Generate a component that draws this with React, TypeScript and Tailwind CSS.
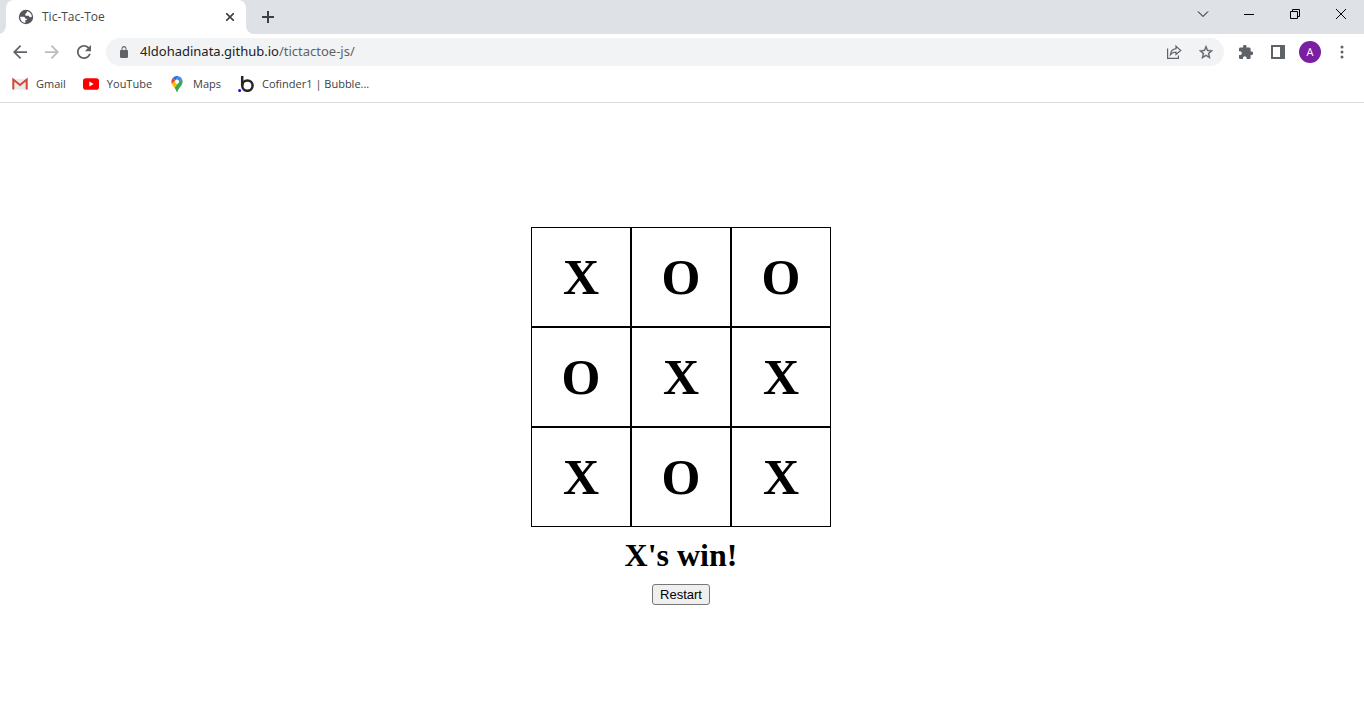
import { useState } from "react";
import type { ReactNode } from "react";

const initialBoard = ["X", "O", "O", "O", "X", "X", "X", "O", "X"];
const lines = [
  [0, 1, 2], [3, 4, 5], [6, 7, 8],
  [0, 3, 6], [1, 4, 7], [2, 5, 8],
  [0, 4, 8], [2, 4, 6],
];

function findWinner(board: string[]) {
  const line = lines.find(([a, b, c]) => board[a] && board[a] === board[b] && board[a] === board[c]);
  return line ? board[line[0]] : "";
}

function IconButton({ label, children, className = "" }: { label: string; children: ReactNode; className?: string }) {
  return (
    <button type="button" aria-label={label} className={`flex h-7 w-8 shrink-0 items-center justify-center ${className}`}>
      {children}
    </button>
  );
}

function TabStrip() {
  return (
    <header className="flex h-[34px] shrink-0 items-stretch bg-[#dee1e6] pl-1.5">
      <div className="relative flex w-60 items-center rounded-t-lg bg-white pl-3 pr-2">
        <svg className="absolute bottom-0 -left-2 h-2 w-2" viewBox="0 0 8 8" fill="#fff"><path d="M8 0v8H0a8 8 0 0 0 8-8z" /></svg>
        <svg className="absolute bottom-0 -right-2 h-2 w-2" viewBox="0 0 8 8" fill="#fff"><path d="M0 0v8h8a8 8 0 0 1-8-8z" /></svg>
        <svg className="h-4 w-4" viewBox="0 0 16 16">
          <circle cx="8" cy="8" r="7.2" fill="#54575c" />
          <path d="M2.100 7.700h3.300c1.300 0 1.900.9 1.900 2h1.500v1.300H7.400v2.700C4.300 13.700 2.200 11.100 2.100 7.700zM8.900 2.300c2.600.4 4.700 2.500 5 5.200-.5.7-1.300 1-2.200.6-.6-.3-.9-.7-.9-1.300H7.400V5.300c0-.8.6-1.200 1.300-1.200z" fill="#fff" />
        </svg>
        <span className="ml-2 flex-1 text-xs text-[#45494d]">Tic-Tac-Toe</span>
        <button type="button" aria-label="Close tab" className="flex h-4 w-4 items-center justify-center">
          <svg className="h-2 w-2" viewBox="0 0 8 8" stroke="#3c4043" strokeWidth="1.6"><path d="M0 0l8 8M8 0L0 8" /></svg>
        </button>
      </div>
      <button type="button" aria-label="New tab" className="ml-2 flex w-7 items-center justify-center">
        <svg className="h-3 w-3" viewBox="0 0 12 12" stroke="#3c4043" strokeWidth="2"><path d="M6 0v12M0 6h12" /></svg>
      </button>
      <div className="ml-auto flex h-7 text-black">
        <button type="button" aria-label="Search tabs" className="flex w-[46px] items-center justify-center">
          <svg className="h-3 w-3" viewBox="0 0 12 12" fill="none" stroke="currentColor"><path d="M1 3.500l5 5 5-5" /></svg>
        </button>
        <button type="button" aria-label="Minimize" className="flex w-[46px] items-center justify-center">
          <svg className="h-2.5 w-2.5" viewBox="0 0 10 10" fill="none" stroke="currentColor"><path d="M0 5.500h10" /></svg>
        </button>
        <button type="button" aria-label="Restore" className="flex w-[46px] items-center justify-center">
          <svg className="h-2.5 w-2.5" viewBox="0 0 10 10" fill="none" stroke="currentColor"><path d="M.5 2.500h7v7h-7zM2.500 2.500v-2h7v7h-2" /></svg>
        </button>
        <button type="button" aria-label="Close window" className="flex w-[46px] items-center justify-center">
          <svg className="h-2.5 w-2.5" viewBox="0 0 10 10" fill="none" stroke="currentColor"><path d="M0 0l10 10M10 0L0 10" /></svg>
        </button>
      </div>
    </header>
  );
}

function Toolbar() {
  return (
    <nav className="flex h-9 shrink-0 items-center bg-white pl-1 pr-1.5 text-[#5f6368]" aria-label="Navigation">
      <IconButton label="Back">
        <svg className="h-3.5 w-3.5" viewBox="4 4 16 16" fill="currentColor"><path d="M20 11H7.830l5.590-5.590L12 4l-8 8 8 8 1.410-1.410L7.830 13H20v-2z" /></svg>
      </IconButton>
      <IconButton label="Forward" className="text-[#babcbe]">
        <svg className="h-3.5 w-3.5" viewBox="4 4 16 16" fill="currentColor"><path d="M12 4l-1.410 1.410L16.170 11H4v2h12.170l-5.580 5.590L12 20l8-8z" /></svg>
      </IconButton>
      <IconButton label="Reload">
        <svg className="h-3.5 w-3.5" viewBox="4 4 16 16" fill="currentColor"><path d="M17.650 6.350C16.200 4.900 14.210 4 12 4c-4.420 0-7.990 3.580-7.990 8s3.570 8 7.990 8c3.730 0 6.840-2.550 7.730-6h-2.080c-.82 2.330-3.040 4-5.650 4-3.310 0-6-2.690-6-6s2.690-6 6-6c1.660 0 3.140.69 4.220 1.780L13 11h7V4l-2.350 2.350z" /></svg>
      </IconButton>
      <div className="ml-1.5 flex h-7 flex-1 items-center rounded-full bg-[#f1f3f4] pl-3.5 pr-0.5">
        <svg className="h-3 w-2" viewBox="4 1 16 21" preserveAspectRatio="none" fill="currentColor"><path d="M18 8h-1V6c0-2.760-2.240-5-5-5S7 3.240 7 6v2H6c-1.100 0-2 .9-2 2v10c0 1.100.9 2 2 2h12c1.100 0 2-.9 2-2V10c0-1.100-.9-2-2-2zM9 6c0-1.660 1.340-3 3-3s3 1.340 3 3v2H9z" /></svg>
        <span className="ml-3 flex-1 font-['Noto_Sans',sans-serif] text-[13px]"><span className="text-[#202124]">4ldohadinata.github.io</span>/tictactoe-js/</span>
        <IconButton label="Share">
          <svg className="h-4 w-4" viewBox="0 0 16 16" fill="none" stroke="currentColor" strokeWidth="1.200"><path d="M1.600 4.500v9.900h10.800v-3M10 2.200l4.700 4.200L10 10.500V8.200c-2.500 0-4.300.8-5.600 2.500.4-3.300 2.300-5.500 5.600-6z" /></svg>
        </IconButton>
        <IconButton label="Bookmark this page">
          <svg className="h-3.5 w-3.5" viewBox="2 2 20 19" fill="currentColor" stroke="currentColor" strokeWidth="0.400"><path d="M22 9.240l-7.190-.62L12 2 9.190 8.630 2 9.240l5.460 4.730L5.820 21 12 17.270 18.180 21l-1.630-7.030L22 9.240zM12 15.400l-3.760 2.270 1-4.280-3.320-2.880 4.380-.38L12 6.100l1.710 4.040 4.380.38-3.320 2.880 1 4.280L12 15.400z" /></svg>
        </IconButton>
      </div>
      <IconButton label="Extensions" className="ml-1.5">
        <svg className="h-3.5 w-3.5" viewBox="2 1.500 20.500 20.500" fill="currentColor"><path d="M20.500 11H19V7c0-1.100-.9-2-2-2h-4V3.500C13 2.120 11.880 1 10.500 1S8 2.120 8 3.500V5H4c-1.100 0-1.990.9-1.990 2v3.800H3.500c1.490 0 2.700 1.210 2.700 2.700s-1.210 2.700-2.700 2.700H2V20c0 1.100.9 2 2 2h3.800v-1.500c0-1.490 1.210-2.700 2.700-2.700 1.490 0 2.700 1.210 2.700 2.700V22H17c1.100 0 2-.9 2-2v-4h1.500c1.380 0 2.500-1.120 2.500-2.500S21.880 11 20.500 11z" /></svg>
      </IconButton>
      <IconButton label="Side panel">
        <svg className="h-3.5 w-3.5" viewBox="0 0 14 14" fill="currentColor"><path fillRule="evenodd" d="M0 0h14v14H0zM2 2v10h7V2z" /></svg>
      </IconButton>
      <IconButton label="Profile">
        <span className="flex h-[22px] w-[22px] items-center justify-center rounded-full bg-[#7b1fa2] text-[11px] text-white">A</span>
      </IconButton>
      <IconButton label="Menu">
        <svg className="h-3.5 w-1" viewBox="0 0 4 14" fill="currentColor"><circle cx="2" cy="2" r="1.500" /><circle cx="2" cy="7" r="1.500" /><circle cx="2" cy="12" r="1.500" /></svg>
      </IconButton>
    </nav>
  );
}

function Bookmark({ label, children }: { label: string; children: ReactNode }) {
  return (
    <a href="#" className="flex items-center gap-2">
      {children}
      <span className="whitespace-nowrap">{label}</span>
    </a>
  );
}

function BookmarksBar() {
  return (
    <nav className="flex h-[33px] shrink-0 items-center gap-[17px] border-b border-[#dadce0] bg-white pb-1 pl-3 text-[11px] text-[#3c4043]" aria-label="Bookmarks">
      <Bookmark label="Gmail">
        <svg className="h-4 w-4" viewBox="0 0 16 16">
          <path d="M1.500 3h13v10.500h-13z" fill="#eceaea" />
          <path d="M1.300 13.500V3.500L8 9l6.700-5.500v10" fill="none" stroke="#d14836" strokeWidth="2" />
        </svg>
      </Bookmark>
      <Bookmark label="YouTube">
        <svg className="h-4 w-4" viewBox="0 0 16 16"><rect y="2.300" width="16" height="11.400" rx="2.800" fill="#f00" /><path d="M6.400 5.500v5l4.200-2.500z" fill="#fff" /></svg>
      </Bookmark>
      <Bookmark label="Maps">
        <svg className="h-4 w-4" viewBox="0 0 92.300 132.300">
          <path fill="#1a73e8" d="M60.200 2.200C55.800.8 51 0 46.100 0 32 0 19.300 6.400 10.800 16.500l21.800 18.300L60.200 2.200z" />
          <path fill="#ea4335" d="M10.800 16.500C4.100 24.500 0 34.900 0 46.100c0 8.700 1.700 15.700 4.600 22l28-33.300-21.800-18.300z" />
          <path fill="#4285f4" d="M46.200 28.500c9.800 0 17.700 7.900 17.700 17.700 0 4.300-1.600 8.300-4.200 11.400 0 0 13.900-16.600 27.500-32.700-5.600-10.800-15.300-19-27-22.700L32.600 34.800c3.300-3.800 8.100-6.300 13.600-6.300" />
          <path fill="#fbbc04" d="M46.200 63.800c-9.800 0-17.700-7.900-17.700-17.700 0-4.300 1.500-8.300 4.100-11.300l-28 33.300c4.800 10.600 12.800 19.200 21 29.900l34.100-40.500c-3.300 3.900-8.100 6.300-13.500 6.300" />
          <path fill="#34a853" d="M59.100 109.200c15.400-24.100 33.300-35 33.300-63 0-7.700-1.900-14.900-5.200-21.300L25.600 98c2.600 3.400 5.300 7.300 7.900 11.300 9.400 14.500 6.800 23.100 12.800 23.100s3.400-8.700 12.800-23.200" />
        </svg>
      </Bookmark>
      <Bookmark label="Cofinder1 | Bubble...">
        <svg className="h-4 w-4" viewBox="0 0 16 16"><circle cx="1.600" cy="14.400" r="1.500" fill="#1010ee" /><path d="M4.200 0v9.800" stroke="#262626" strokeWidth="2.500" /><circle cx="9.400" cy="9.600" r="5.200" fill="none" stroke="#262626" strokeWidth="2.500" /></svg>
      </Bookmark>
    </nav>
  );
}

export default function App() {
  const [board, setBoard] = useState(initialBoard);
  const winner = findWinner(board);
  const full = board.every(Boolean);

  const play = (index: number) => {
    if (board[index] || winner) return;
    const mark = board.filter(Boolean).length % 2 === 0 ? "X" : "O";
    setBoard(board.map((cell, i) => (i === index ? mark : cell)));
  };

  return (
    <div className="flex min-h-screen flex-col bg-white font-['Open_Sans','Noto_Sans',sans-serif]">
      <TabStrip />
      <Toolbar />
      <BookmarksBar />
      <main className="flex flex-1 flex-col items-center justify-center pt-2 pr-0.5 text-black">
        <div className="grid grid-cols-3 font-['Liberation_Serif',serif]">
          {board.map((cell, index) => (
            <button
              key={index}
              type="button"
              aria-label={`Cell ${index + 1} ${cell}`}
              onClick={() => play(index)}
              className="flex h-[100px] w-[100px] items-center justify-center border border-black text-[50px] leading-none font-bold"
            >
              {cell}
            </button>
          ))}
        </div>
        <h1 className="my-2.5 h-[37px] font-['Liberation_Serif',serif] text-[32px] leading-[37px] font-bold">
          {winner ? `${winner}'s win!` : full ? "Draw!" : ""}
        </h1>
        <button
          type="button"
          onClick={() => setBoard(Array(9).fill(""))}
          className="h-[21px] rounded-[3px] border border-[#767676] bg-[#efefef] px-[7px] font-['Liberation_Sans',sans-serif] text-[13px] leading-none"
        >
          Restart
        </button>
      </main>
    </div>
  );
}
